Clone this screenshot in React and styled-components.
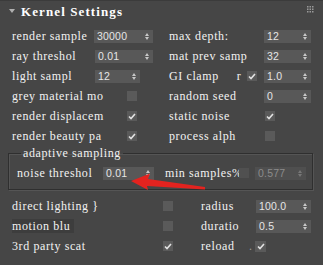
import React from 'react'
import styled, {createGlobalStyle} from 'styled-components'

const Global = createGlobalStyle`
  html, body {
    margin: 0;
    padding: 0;
    background: #464646;
  }
`

const Panel = styled.div`
  position: relative;
  width: 323px;
  height: 265px;
  overflow: hidden;
  background: #464646;
  color: #f2f2f2;
  font-family: "Liberation Serif", "Times New Roman", serif;
  font-size: 12px;
  letter-spacing: 0.6px;
`

const Header = styled.div`
  height: 26px;
  box-sizing: border-box;
  display: flex;
  align-items: flex-start;
  padding: 4px 0 0 9px;
  border-top: 1px solid #3b3b3b;
`
const Twisty = styled.span`
  margin-top: 4px;
  width: 0;
  height: 0;
  border-left: 3px solid transparent;
  border-right: 3px solid transparent;
  border-top: 4px solid #b0b0b0;
`
const Title = styled.span`
  margin-left: 6px;
  font-size: 13px;
  font-weight: bold;
  line-height: 14px;
  letter-spacing: 1.1px;
  color: #ffffff;
`
const Grip = styled.svg`
  margin-left: auto;
  margin-right: 9px;
  margin-top: 1px;
`

const TopGrid = styled.div`
  display: grid;
  grid-template-columns: 157px 1fr;
  grid-auto-rows: 20px;
  padding-left: 12px;
`
const Row = styled.div`
  display: flex;
  align-items: center;
  height: 20px;
`
const Label = styled.span`
  flex-shrink: 0;
  width: ${p => p.$w}px;
  margin-left: ${p => p.$ml || 0}px;
  white-space: pre;
  line-height: 14px;
  background: ${p => (p.$hl ? '#3d3d3d' : 'transparent')};
`

const SpinBox = styled.div`
  width: ${p => p.$w}px;
  height: 13px;
  flex-shrink: 0;
  display: flex;
  align-items: center;
  background: ${p => (p.$off ? '#4f4f4f' : '#585858')};
  color: ${p => (p.$off ? '#8c8c8c' : '#e6e6e6')};
  font-family: "Liberation Sans", Arial, sans-serif;
  font-size: 10.5px;
  letter-spacing: 0.2px;
`
const SpinValue = styled.span`
  flex: 1;
  padding-left: 3px;
`
const SpinArrows = styled.span`
  display: flex;
  flex-direction: column;
  gap: 1px;
  margin-right: 4px;
`
const ArrowUp = styled.span`
  width: 0;
  height: 0;
  border-left: 2px solid transparent;
  border-right: 2px solid transparent;
  border-bottom: 3px solid ${p => (p.$off ? '#777' : '#c8c8c8')};
`
const ArrowDown = styled(ArrowUp)`
  border-bottom: none;
  border-top: 3px solid ${p => (p.$off ? '#777' : '#c8c8c8')};
`

const Box = styled.span`
  flex-shrink: 0;
  width: ${p => p.$s || 10}px;
  height: ${p => p.$s || 10}px;
  background: ${p => (p.$dark ? '#505050' : '#5a5a5a')};
  display: flex;
  align-items: center;
  justify-content: center;
`

const Group = styled.fieldset`
  margin: 0 10px 0 8px;
  padding: 3px 0 6px 8px;
  border: 1px solid #2f2f2f;
  box-shadow: inset 1px 1px 0 #555, 1px 1px 0 #555;
`
const Legend = styled.legend`
  margin-left: 4px;
  padding: 0 2px;
  line-height: 14px;
`

const BottomGrid = styled.div`
  display: grid;
  grid-auto-rows: 20px;
  padding: 6px 0 0 12px;
`

const Dot = styled.span`
  flex-shrink: 0;
  width: 6px;
  color: #999;
`

const Arrow = styled.svg`
  position: absolute;
  left: 0;
  top: 0;
  pointer-events: none;
`

const Spinner = ({value, w, off}) => (
  <SpinBox $w={w} $off={off}>
    <SpinValue>{value}</SpinValue>
    <SpinArrows>
      <ArrowUp $off={off} />
      <ArrowDown $off={off} />
    </SpinArrows>
  </SpinBox>
)

const Check = ({on, s, dark}) => (
  <Box $s={s} $dark={dark}>
    {on && (
      <svg width="8" height="7" viewBox="0 0 8 7">
        <path d="M1 3.5 L3 5.5 L7 1" stroke="#e2e2e2" strokeWidth="1.6" fill="none" />
      </svg>
    )}
  </Box>
)

const GripIcon = () => (
  <Grip width="7" height="7" viewBox="0 0 7 7">
    {[0, 1, 2].map(r =>
      [0, 1, 2].map(c => (
        <rect key={r + '-' + c} x={c * 2.5} y={r * 2.5} width="1.5" height="1.5" fill="#9a9a9a" />
      ))
    )}
  </Grip>
)

export default function App() {
  return (
    <Panel>
      <Global />
      <Header>
        <Twisty />
        <Title>Kernel Settings</Title>
        <GripIcon />
      </Header>

      <TopGrid>
        <Row>
          <Label $w={82}>render sample</Label>
          <Spinner value="30000" w={59} />
        </Row>
        <Row>
          <Label $w={95}>max depth:</Label>
          <Spinner value="12" w={47} />
        </Row>

        <Row>
          <Label $w={83}>ray threshol</Label>
          <Spinner value="0.01" w={58} />
        </Row>
        <Row>
          <Label $w={95}>mat prev samp</Label>
          <Spinner value="32" w={47} />
        </Row>

        <Row>
          <Label $w={83}>light sampl</Label>
          <Spinner value="12" w={45} />
        </Row>
        <Row>
          <Label $w={78}>{'GI clamp     r'}</Label>
          <Check on />
          <Label $w={7} />
          <Spinner value="1.0" w={47} />
        </Row>

        <Row>
          <Label $w={115}>grey material mo</Label>
          <Check />
        </Row>
        <Row>
          <Label $w={95}>random seed</Label>
          <Spinner value="0" w={47} />
        </Row>

        <Row>
          <Label $w={115}>render displacem</Label>
          <Check on />
        </Row>
        <Row>
          <Label $w={96}>static noise</Label>
          <Check on />
        </Row>

        <Row>
          <Label $w={115}>render beauty pa</Label>
          <Check on />
        </Row>
        <Row>
          <Label $w={96}>process alph</Label>
          <Check />
        </Row>
      </TopGrid>

      <Group>
        <Legend>adaptive sampling</Legend>
        <Row>
          <Label $w={86}>noise threshol</Label>
          <Spinner value="0.01" w={51} />
          <Label $w={74} $ml={11}>min samples%</Label>
          <Check dark />
          <Label $w={6} />
          <Spinner value="0.577" w={51} off />
        </Row>
      </Group>

      <BottomGrid>
        <Row>
          <Label $w={151}>direct lighting }</Label>
          <Check />
          <Label $w={28} />
          <Label $w={55}>radius</Label>
          <Spinner value="100.0" w={55} />
        </Row>
        <Row>
          <Label $w={62} $hl>motion blu</Label>
          <Label $w={89} />
          <Check />
          <Label $w={28} />
          <Label $w={55}>duratio</Label>
          <Spinner value="0.5" w={55} />
        </Row>
        <Row>
          <Label $w={151}>3rd party scat</Label>
          <Check on />
          <Label $w={28} />
          <Label $w={48}>reload</Label>
          <Dot>.</Dot>
          <Check on s={11} />
        </Row>
      </BottomGrid>

      <Arrow width="323" height="265" viewBox="0 0 323 265">
        <path d="M131 181 L150 173.5 L148 179 L205 187 L205 189.5 L147 186 L148 190 Z" fill="#e3231f" />
      </Arrow>
    </Panel>
  )
}
